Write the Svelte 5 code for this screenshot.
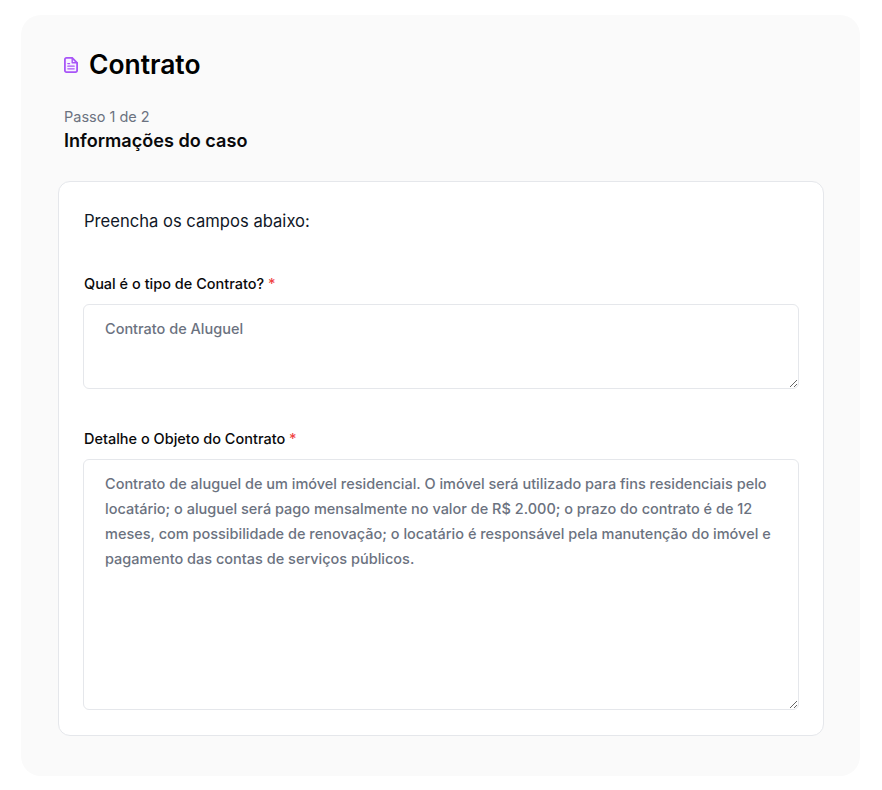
<script>
  let tipo = $state("Contrato de Aluguel");
  let objeto = $state(
    "Contrato de aluguel de um imóvel residencial. O imóvel será utilizado para fins residenciais pelo locatário; o aluguel será pago mensalmente no valor de R$ 2.000; o prazo do contrato é de 12 meses, com possibilidade de renovação; o locatário é responsável pela manutenção do imóvel e pagamento das contas de serviços públicos."
  );
</script>

<div class="page">
  <main class="panel">
    <header class="title">
      <svg class="icon" viewBox="0 0 14 16" width="14" height="16" fill="none" stroke="#a855f7" stroke-width="1.8" stroke-linecap="round" stroke-linejoin="round">
        <path d="M2.4 .9h5.8l4.9 4.9v7.8a1.5 1.5 0 0 1-1.5 1.5H2.4a1.5 1.5 0 0 1-1.5-1.5V2.4A1.5 1.5 0 0 1 2.4 .9z" fill="#f8f2ff" />
        <path d="M8.2 .9v4.9h4.9" stroke-width="1.4" />
        <path d="M3.8 6.6h1.8M3.8 9.2h6.4M3.8 11.8h6.4" stroke-width="1.2" />
      </svg>
      <h1>Contrato</h1>
    </header>

    <p class="step">Passo 1 de 2</p>
    <h2>Informações do caso</h2>

    <section class="card">
      <p class="lead">Preencha os campos abaixo:</p>

      <label class="field">
        <span class="label">Qual é o tipo de Contrato? <span class="req">*</span></span>
        <textarea class="short" readonly bind:value={tipo}></textarea>
      </label>

      <label class="field second">
        <span class="label">Detalhe o Objeto do Contrato <span class="req">*</span></span>
        <textarea class="long" readonly bind:value={objeto}></textarea>
      </label>
    </section>
  </main>
</div>

<style>
  :global(body) {
    background: #fff;
    font-family: Inter, "Liberation Sans", sans-serif;
  }

  .page {
    padding: 15px 22px 14px 21px;
  }

  .panel {
    background: #fafafa;
    border-radius: 20px;
    padding: 31px 36px 40px 37px;
    height: 761px;
    box-sizing: border-box;
  }

  .title {
    display: flex;
    align-items: center;
    gap: 11px;
    padding-left: 6px;
    height: 36px;
  }

  .icon {
    flex-shrink: 0;
    margin-top: 2px;
  }

  h1 {
    margin: 0;
    font-size: 26.4px;
    line-height: 36px;
    font-weight: 600;
    color: #000;
  }

  .step {
    margin: 25px 0 0 6px;
    font-size: 14.5px;
    line-height: 20px;
    color: #6b7280;
  }

  h2 {
    margin: -1px 0 0 6px;
    font-size: 18.1px;
    line-height: 28px;
    font-weight: 600;
    color: #09090b;
  }

  .card {
    margin-top: 27px;
    background: #fff;
    border: 1px solid #e5e7eb;
    border-radius: 12px;
    padding: 27px 24px;
    height: 555px;
    box-sizing: border-box;
  }

  .lead {
    margin: 0 0 0 1px;
    font-size: 16.6px;
    line-height: 24px;
    color: #111827;
  }

  .field {
    display: block;
    margin-top: 41px;
  }

  .field.second {
    margin-top: 40px;
  }

  .label {
    display: block;
    margin-left: 1px;
    font-size: 14.5px;
    line-height: 20px;
    font-weight: 500;
    color: #09090b;
    margin-bottom: 10px;
  }

  .req {
    color: #ef4444;
  }

  textarea {
    display: block;
    width: 100%;
    box-sizing: border-box;
    margin: 0;
    border: 1px solid #e5e7eb;
    border-radius: 6px;
    background: #fff;
    padding: 11px 21px;
    font-family: inherit;
    font-size: 14.5px;
    line-height: 25px;
    font-weight: 500;
    color: #6b7280;
    outline: none;
    resize: vertical;
  }

  .short {
    height: 85px;
  }

  .long {
    height: 251px;
  }
</style>
